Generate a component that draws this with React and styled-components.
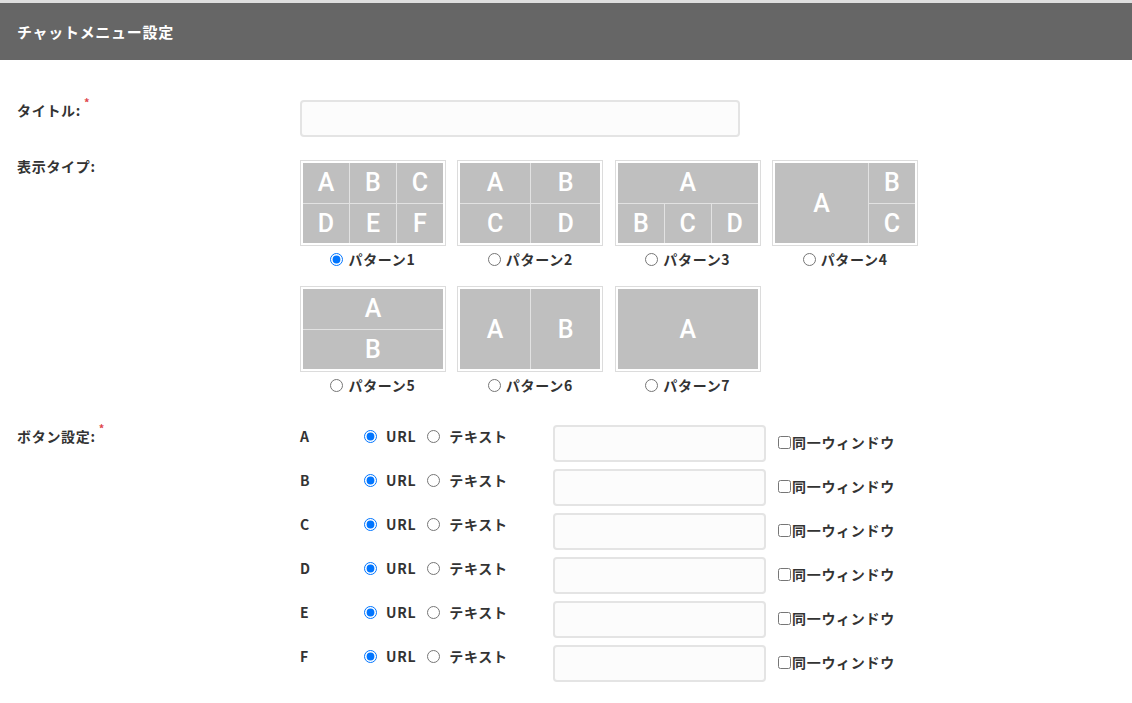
import React from 'react';
import styled, { createGlobalStyle } from 'styled-components';

const GlobalStyle = createGlobalStyle`
  body {
    margin: 0;
    background: #fff;
    color: #333;
    font-family: "Noto Sans CJK JP", "Noto Sans", sans-serif;
    letter-spacing: 0.7px;
  }
`;

const patterns = [
  { id: 1, cols: '1fr 1fr 1fr', rows: '1fr 1fr', cells: [{ l: 'A' }, { l: 'B' }, { l: 'C' }, { l: 'D' }, { l: 'E' }, { l: 'F' }] },
  { id: 2, cols: '1fr 1fr', rows: '1fr 1fr', cells: [{ l: 'A' }, { l: 'B' }, { l: 'C' }, { l: 'D' }] },
  { id: 3, cols: '1fr 1fr 1fr', rows: '1fr 1fr', cells: [{ l: 'A', area: '1 / 1 / 2 / 4' }, { l: 'B' }, { l: 'C' }, { l: 'D' }] },
  { id: 4, cols: '2fr 1fr', rows: '1fr 1fr', cells: [{ l: 'A', area: '1 / 1 / 3 / 2' }, { l: 'B' }, { l: 'C' }] },
  { id: 5, cols: '1fr', rows: '1fr 1fr', cells: [{ l: 'A' }, { l: 'B' }] },
  { id: 6, cols: '1fr 1fr', rows: '1fr', cells: [{ l: 'A' }, { l: 'B' }] },
  { id: 7, cols: '1fr', rows: '1fr', cells: [{ l: 'A' }] },
];

const buttons = ['A', 'B', 'C', 'D', 'E', 'F'];

export default function App() {
  return (
    <Page>
      <GlobalStyle />
      <Header>チャットメニュー設定</Header>
      <Form>
        <FieldRow>
          <Label>タイトル:<Required>*</Required></Label>
          <TitleInput type="text" />
        </FieldRow>

        <FieldRow>
          <Label>表示タイプ:</Label>
          <PatternGrid>
            {patterns.map((p) => (
              <PatternItem key={p.id}>
                <Thumb $cols={p.cols} $rows={p.rows}>
                  {p.cells.map((c) => (
                    <Cell key={c.l} $area={c.area}>{c.l}</Cell>
                  ))}
                </Thumb>
                <RadioLabel>
                  <Radio type="radio" name="pattern" defaultChecked={p.id === 1} />
                  パターン{p.id}
                </RadioLabel>
              </PatternItem>
            ))}
          </PatternGrid>
        </FieldRow>

        <FieldRow $spaced>
          <Label>ボタン設定:<Required>*</Required></Label>
          <ButtonList>
            {buttons.map((b) => (
              <ButtonRow key={b}>
                <Letter>{b}</Letter>
                <TypeGroup>
                  <TypeOption>
                    <Radio type="radio" name={`type-${b}`} defaultChecked />
                    URL
                  </TypeOption>
                  <TypeOption>
                    <Radio type="radio" name={`type-${b}`} />
                    テキスト
                  </TypeOption>
                </TypeGroup>
                <ValueInput type="text" />
                <WindowOption>
                  <Check type="checkbox" />
                  同一ウィンドウ
                </WindowOption>
              </ButtonRow>
            ))}
          </ButtonList>
        </FieldRow>
      </Form>
    </Page>
  );
}

const Page = styled.div`
  border-top: 3px solid #dedede;
`;

const Header = styled.div`
  height: 57px;
  background: #666;
  color: #fff;
  font-size: 15px;
  font-weight: 700;
  letter-spacing: 0.7px;
  display: flex;
  align-items: center;
  padding: 0 17px;
`;

const Form = styled.div`
  padding: 40px 17px 20px;
`;

const FieldRow = styled.div`
  display: grid;
  grid-template-columns: 283px 1fr;
  align-items: start;
  margin-top: ${(p) => (p.$spaced ? '31px' : '19px')};
  &:first-child {
    margin-top: 0;
  }
`;

const Label = styled.div`
  font-size: 14px;
  font-weight: 700;
  line-height: 20px;
`;

const Required = styled.span`
  color: #e0474c;
  font-size: 11px;
  position: relative;
  top: -9px;
  margin-left: 3px;
`;

const TitleInput = styled.input`
  box-sizing: border-box;
  width: 440px;
  height: 37px;
  border: 2px solid #e4e4e4;
  border-radius: 4px;
  background: #fcfcfc;
  outline: none;
`;

const PatternGrid = styled.div`
  display: grid;
  grid-template-columns: repeat(4, 146px);
  column-gap: 11.4px;
  row-gap: 17px;
  margin-top: 4px;
`;

const PatternItem = styled.div`
  display: flex;
  flex-direction: column;
  align-items: center;
`;

const Thumb = styled.div`
  box-sizing: border-box;
  width: 146px;
  height: 86px;
  border: 1px solid #dcdcdc;
  padding: 2px;
  display: grid;
  grid-template-columns: ${(p) => p.$cols};
  grid-template-rows: ${(p) => p.$rows};
  gap: 1px;
  background-clip: content-box;
  background-color: #e2e2e2;
  box-shadow: inset 0 0 0 2px #fff, inset 0 0 0 3px #e2e2e2;
  & > * {
    min-width: 0;
  }
`;

const Cell = styled.div`
  grid-area: ${(p) => p.$area || 'auto'};
  background: #bfbfbf;
  color: #fff;
  font-family: Roboto, "Noto Sans", sans-serif;
  font-size: 25px;
  font-weight: 500;
  letter-spacing: 0;
  display: flex;
  align-items: center;
  justify-content: center;
`;

const RadioLabel = styled.label`
  display: flex;
  align-items: center;
  gap: 5px;
  margin-top: 3px;
  font-size: 14px;
  font-weight: 700;
  line-height: 20px;
`;

const Radio = styled.input`
  width: 13px;
  height: 13px;
  margin: 0;
`;

const ButtonList = styled.div`
  display: flex;
  flex-direction: column;
  gap: 7px;
  margin-top: -1px;
`;

const ButtonRow = styled.div`
  display: flex;
  align-items: flex-start;
`;

const Letter = styled.div`
  width: 64px;
  padding-top: 1px;
  font-size: 14px;
  font-weight: 700;
  line-height: 20px;
`;

const TypeGroup = styled.div`
  width: 189px;
  display: flex;
  gap: 11px;
  padding-top: 1px;
`;

const TypeOption = styled.label`
  display: flex;
  align-items: center;
  gap: 9px;
  font-size: 14px;
  font-weight: 700;
  line-height: 20px;
`;

const ValueInput = styled.input`
  box-sizing: border-box;
  width: 213px;
  height: 37px;
  border: 2px solid #e4e4e4;
  border-radius: 4px;
  background: #fcfcfc;
  outline: none;
`;

const WindowOption = styled.label`
  display: flex;
  align-items: center;
  gap: 1px;
  margin-left: 12px;
  padding-top: 7px;
  font-size: 14px;
  font-weight: 700;
  line-height: 20px;
`;

const Check = styled.input`
  width: 13px;
  height: 13px;
  margin: 0;
`;
